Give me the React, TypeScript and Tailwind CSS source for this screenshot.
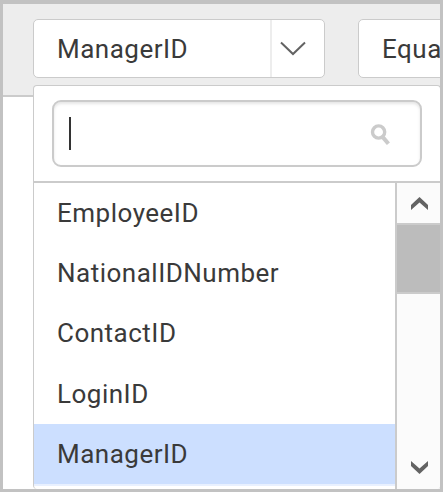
const fields = ["EmployeeID", "NationalIDNumber", "ContactID", "LoginID", "ManagerID"];

function SearchIcon() {
  return (
    <svg className="h-6 w-6 shrink-0" viewBox="0 0 24 24" fill="none" stroke="#cbcbcb">
      <circle cx="9.6" cy="10" r="6.1" strokeWidth="3.4" />
      <path d="M13.4 14.6 L19.4 21.8" strokeWidth="4" />
    </svg>
  );
}

function ScrollBar() {
  return (
    <div className="flex w-[45px] shrink-0 flex-col border-l-2 border-[#cbcbcb] bg-[#fbfbfb]">
      <div className="flex h-10 w-[45px] justify-center pt-[14px]">
        <svg className="h-[13px] w-[17px]" viewBox="0 0 17 13" fill="#636363">
          <path d="M8.5 0 L17 8 V13 L8.5 5.5 L0 13 V8 Z" />
        </svg>
      </div>
      <div className="h-[71px] border-y-2 border-[#cbcbcb] bg-[#bcbcbc]" />
      <div className="flex-1" />
      <div className="flex w-[45px] justify-center pb-[15px]">
        <svg className="h-[13px] w-[17px]" viewBox="0 0 17 13" fill="#636363">
          <path d="M8.5 13 L17 5 V0 L8.5 7.5 L0 0 V5 Z" />
        </svg>
      </div>
    </div>
  );
}

function FieldMenu() {
  return (
    <div className="absolute top-[81px] left-[30px] flex h-[404px] w-[408px] flex-col overflow-hidden rounded-[4px] border border-b-0 border-[#cbcbcb] bg-white">
      <div className="h-[97px] shrink-0 border-b-2 border-[#cbcbcb] pt-[14px] pl-[18px]">
        <div className="flex h-[67px] w-[370px] items-center justify-between rounded-[9px] border-2 border-[#cbcbcb] bg-white pr-[27px] pl-[15px] shadow-[inset_0_2px_3px_rgba(0,0,0,0.10)]">
          <div className="h-[33px] w-[2px] bg-[#333]" />
          <SearchIcon />
        </div>
      </div>
      <div className="flex h-[306px] shrink-0">
        <ul className="min-w-0 flex-1">
          {fields.map((name) => (
            <li
              key={name}
              className={`flex h-[60.2px] items-center pl-[23px] ${name === "ManagerID" ? "bg-[#ccdfff]" : ""}`}
            >
              {name}
            </li>
          ))}
          <li className="h-[2px] bg-[#e8f0ff]" />
        </ul>
        <ScrollBar />
      </div>
    </div>
  );
}

export default function App() {
  return (
    <div className="h-[492px] w-[443px] overflow-hidden border-[3px] border-t-4 border-[#c2c2c2] bg-white font-[Roboto,sans-serif] text-[26px] leading-[30px] font-normal tracking-[0.5px] text-[#3a3a3a]">
      <div className="relative h-full overflow-hidden">
        <div className="flex h-[93px] gap-[33px] border-b-2 border-[#cbcbcb] bg-[#ededed] pt-[15px] pl-[30px]">
          <div className="flex h-[59px] w-[292px] shrink-0 rounded-[5px] border border-[#cbcbcb] bg-white">
            <div className="flex flex-1 items-center pl-[23px]">ManagerID</div>
            <div className="flex w-[54px] items-center border-l-2 border-[#ededed] pl-[8px]">
              <svg className="h-[15px] w-[26px]" viewBox="0 0 26 15" fill="none" stroke="#636363" strokeWidth="2">
                <path d="M1 1.5 L13 13 L25 1.5" />
              </svg>
            </div>
          </div>
          <div className="flex h-[59px] w-[292px] shrink-0 items-center rounded-[5px] border border-[#cbcbcb] bg-white pl-[23px]">
            Equa
          </div>
        </div>
        <FieldMenu />
      </div>
    </div>
  );
}
